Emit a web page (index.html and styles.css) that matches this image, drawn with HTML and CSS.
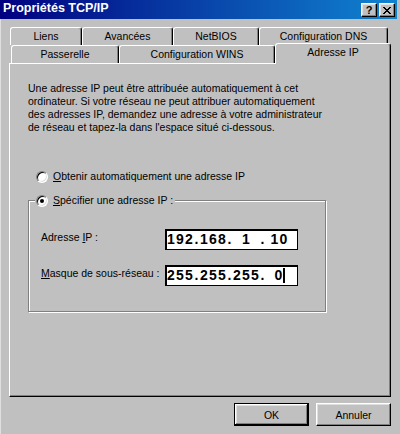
FILE: index.html
```html
<!DOCTYPE html>
<html lang="fr">
<head>
<meta charset="utf-8">
<title>Propriétés TCP/IP</title>
<link rel="stylesheet" href="styles.css">
</head>
<body>
<div class="window">
  <div class="titlebar">
    <span class="title">Propriétés TCP/IP</span>
    <div class="caption-btns">
      <span class="cbtn help">?</span>
      <span class="cbtn close"><svg width="8" height="7" viewBox="0 0 8 7" shape-rendering="crispEdges"><path d="M0 0h2v1H0zM6 0h2v1H6zM1 1h2v1H1zM5 1h2v1H5zM2 2h4v1H2zM3 3h2v1H3zM2 4h4v1H2zM1 5h2v1H1zM5 5h2v1H5zM0 6h2v1H0zM6 6h2v1H6z" fill="#000"/></svg></span>
    </div>
  </div>

  <div class="tabs">
    <div class="tabrow back">
      <div class="tab t-liens">Liens</div>
      <div class="tab t-avancees">Avancées</div>
      <div class="tab t-netbios">NetBIOS</div>
      <div class="tab t-dns">Configuration DNS</div>
    </div>
    <div class="tabrow front">
      <div class="tab t-passerelle">Passerelle</div>
      <div class="tab t-wins">Configuration WINS</div>
      <div class="tab t-ip selected">Adresse IP</div>
    </div>
  </div>

  <div class="panel">
    <p class="intro">Une adresse IP peut être attribuée automatiquement à cet<br>ordinateur. Si votre réseau ne peut attribuer automatiquement<br>des adresses IP, demandez une adresse à votre administrateur<br>de réseau et tapez-la dans l'espace situé ci-dessous.</p>

    <div class="option first"><span class="radio"></span><span class="rlabel"><u>O</u>btenir automatiquement une adresse IP</span></div>

    <fieldset class="group">
      <legend><span class="option"><span class="radio checked"></span><span class="rlabel"><u>S</u>pécifier une adresse IP :</span></span></legend>
      <div class="fields">
        <div class="field">
          <span class="flabel">Adresse <u>I</u>P :</span>
          <div class="ipbox"><span class="oct">192</span><span class="dot">.</span><span class="oct">168</span><span class="dot">.</span><span class="oct">1</span><span class="dot">.</span><span class="oct">10</span></div>
        </div>
        <div class="field">
          <span class="flabel"><u>M</u>asque de sous-réseau :</span>
          <div class="ipbox"><span class="oct">255</span><span class="dot">.</span><span class="oct">255</span><span class="dot">.</span><span class="oct">255</span><span class="dot">.</span><span class="oct">0<span class="caret"></span></span></div>
        </div>
      </div>
    </fieldset>
  </div>

  <div class="actions">
    <button class="btn default">OK</button>
    <button class="btn">Annuler</button>
  </div>
</div>
</body>
</html>
```

FILE: styles.css
```css
* { box-sizing: border-box; }

html, body {
  margin: 0;
  padding: 0;
}

body {
  width: 400px;
  height: 434px;
  overflow: hidden;
  background: #c0c0c0;
  box-shadow: inset 1px 0 0 #dfdfdf;
  font-family: "Liberation Sans", Arial, sans-serif;
  font-size: 10.5px;
  line-height: 13px;
  color: #000;
}

.window {
  height: 434px;
}

/* Title bar */
.titlebar {
  height: 19px;
  margin-right: 3px;
  display: flex;
  justify-content: space-between;
  background: linear-gradient(90deg, #000080 0%, #1084d0 100%);
}

.title {
  color: #fff;
  font-weight: bold;
  font-size: 12.5px;
  line-height: 17px;
  padding-left: 3px;
}

.caption-btns {
  display: flex;
  gap: 2px;
  margin-top: 3px;
  margin-right: 2px;
}

.cbtn {
  width: 16px;
  height: 14px;
  background: #c0c0c0;
  border: 1px solid;
  border-color: #fff #000 #000 #fff;
  box-shadow: inset -1px -1px 0 #808080, inset 1px 1px 0 #dfdfdf;
  display: flex;
  align-items: center;
  justify-content: center;
  font-weight: bold;
  font-size: 11px;
  line-height: 12px;
}

/* Tabs */
.tabs {
  margin: 8px 0 0 9px;
  width: 382px;
}

.tabrow {
  display: flex;
  height: 18px;
}

.back { padding-left: 1px; }
.front { padding-left: 2px; }

.tab {
  flex: none;
  height: 18px;
  background: #c0c0c0;
  border-top: 1px solid #fff;
  border-left: 1px solid #fff;
  border-right: 1px solid #000;
  border-radius: 3px 3px 0 0;
  box-shadow: inset -1px 0 0 #808080;
  text-align: center;
  line-height: 16px;
  white-space: nowrap;
}

.t-liens { width: 72px; }
.t-avancees { width: 91px; }
.t-netbios { width: 86px; }
.t-dns { width: 129px; }
.t-passerelle { width: 108px; }
.t-wins { width: 156px; }
.t-ip { width: 116px; }

.tab.selected {
  height: 21px;
  margin-top: -2px;
  line-height: 17px;
  position: relative;
  z-index: 1;
}

/* Panel */
.panel {
  margin-left: 9px;
  width: 382px;
  height: 334px;
  border: 1px solid;
  border-color: #fff #000 #000 #fff;
  box-shadow: inset -1px -1px 0 #808080;
  padding: 18px 0 0 18px;
}

.intro {
  margin: 0;
  line-height: 13px;
  white-space: nowrap;
}

.option {
  display: flex;
  align-items: center;
  gap: 5px;
  height: 13px;
  white-space: nowrap;
}

.option.first {
  margin: 36px 0 0 8px;
}

.radio {
  flex: none;
  width: 12px;
  height: 12px;
  border-radius: 50%;
  background: #fff;
  border: 1px solid;
  border-color: #808080 #fff #fff #808080;
  box-shadow: inset 1px 1px 0 #000, inset -1px -1px 0 #dfdfdf;
  display: flex;
  align-items: center;
  justify-content: center;
}

.radio.checked::after {
  content: "";
  width: 4px;
  height: 4px;
  border-radius: 50%;
  background: #000;
}

u {
  text-decoration: underline;
  text-underline-offset: 1px;
}

/* Group box */
.group {
  margin: 11px 0 0 0;
  width: 298px;
  padding: 0;
  border: 1px solid #808080;
  box-shadow: 1px 1px 0 #fff, inset 1px 1px 0 #fff;
  min-inline-size: 0;
}

.group legend {
  padding: 0 2px 0 1px;
  margin-left: 6px;
  background: #c0c0c0;
  line-height: 13px;
}

.fields {
  padding: 22px 0 25px 12px;
  display: flex;
  flex-direction: column;
  gap: 15px;
}

.field {
  display: flex;
  align-items: flex-start;
  height: 21px;
}

.flabel {
  width: 124px;
  padding-top: 2px;
  flex: none;
  white-space: nowrap;
}

.ipbox {
  width: 133px;
  height: 21px;
  background: #fff;
  border: 1px solid #000;
  box-shadow: inset 1px 1px 0 #000;
  padding-left: 1px;
  display: flex;
  align-items: center;
  font-family: "Liberation Sans", Arial, sans-serif;
  font-weight: bold;
  font-size: 14px;
  letter-spacing: 1.2px;
  line-height: 17px;
}

.oct {
  width: 27px;
  display: flex;
  justify-content: center;
  align-items: center;
}

.dot {
  width: 6px;
  text-align: center;
}

.caret {
  display: inline-block;
  width: 2px;
  height: 15px;
  background: #000;
  margin-left: -1px;
}

/* Buttons */
.actions {
  display: flex;
  justify-content: flex-end;
  gap: 7px;
  margin-top: 6px;
  padding-right: 9px;
}

.btn {
  width: 75px;
  height: 23px;
  padding: 0;
  background: #c0c0c0;
  border: 1px solid;
  border-color: #fff #000 #000 #fff;
  box-shadow: inset -1px -1px 0 #808080, inset 1px 1px 0 #dfdfdf;
  font-family: "Liberation Sans", Arial, sans-serif;
  font-size: 10.5px;
  color: #000;
}

.btn.default {
  border: 1px solid #000;
  box-shadow: inset -1px -1px 0 #000, inset 1px 1px 0 #fff, inset -2px -2px 0 #808080, inset 2px 2px 0 #dfdfdf;
}
```
